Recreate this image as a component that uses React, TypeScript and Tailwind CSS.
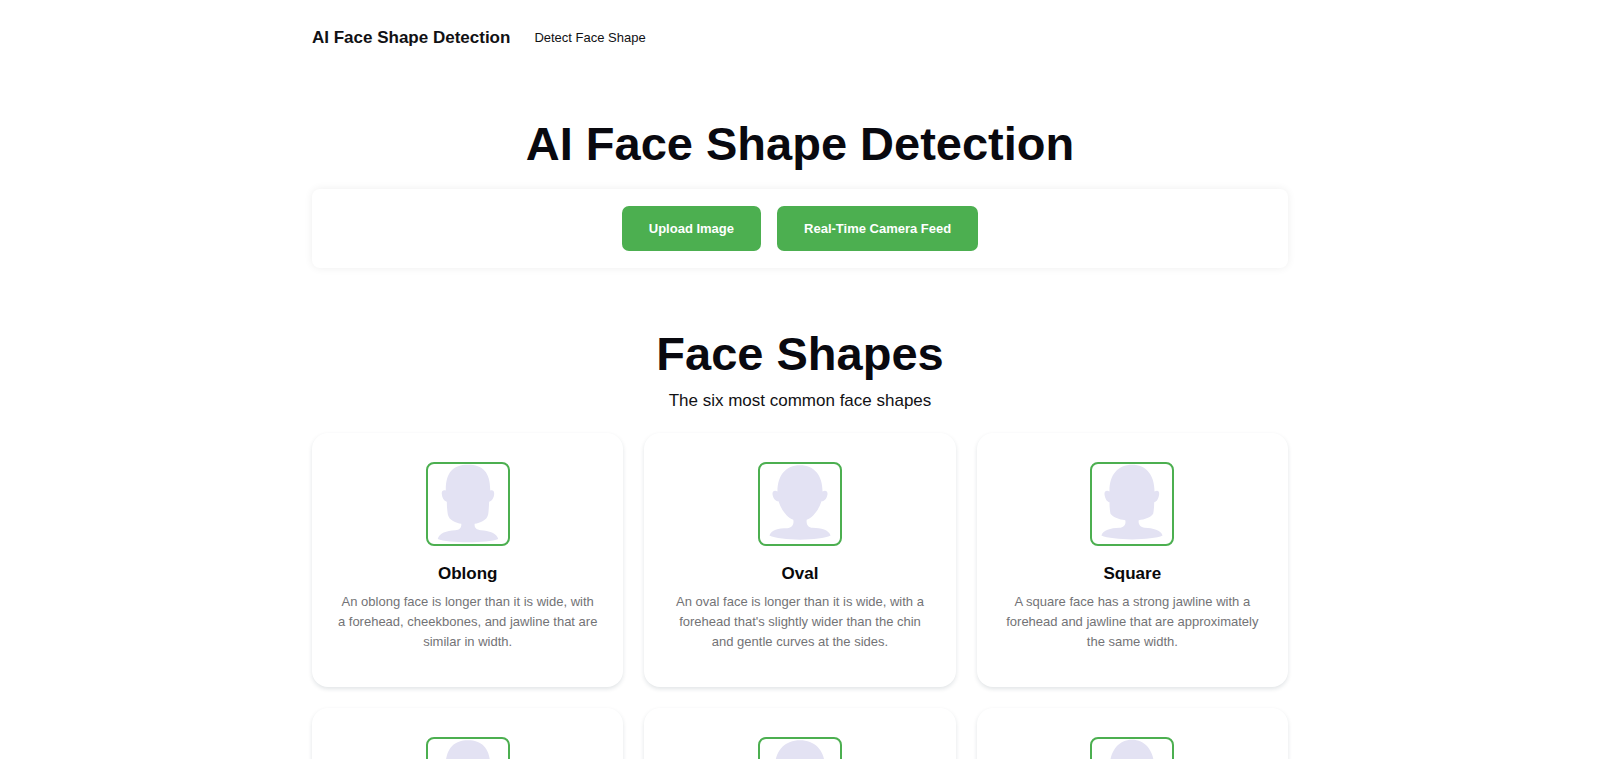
type Shape = {
  name: string
  description: string
  path: string
}

const shapes: Shape[] = [
  {
    name: "Oblong",
    description:
      "An oblong face is longer than it is wide, with a forehead, cheekbones, and jawline that are similar in width.",
    path: "M0 42 C-45 42 -67 66 -66 119 C-73 117 -79 119 -78 129 C-77 141 -72 149 -63 152 C-63 165 -62 178 -60 190 C-56 208 -36 215 -20 218 C-19 228 -24 236 -38 237 C-64 238 -86 246 -90 263 C-60 276 60 276 90 263 C86 246 62 238 38 237 C24 236 18 228 20 218 C36 215 56 208 60 190 C62 178 62 165 63 152 C72 149 77 141 78 129 C78 119 73 117 66 119 C67 66 45 42 0 42Z",
  },
  {
    name: "Oval",
    description:
      "An oval face is longer than it is wide, with a forehead that's slightly wider than the chin and gentle curves at the sides.",
    path: "M0 44 C-42 44 -67 74 -67 122 C-74 117 -82 119 -82 129 C-80 142 -74 150 -64 151 C-56 176 -40 198 -20 206 C-17 220 -24 230 -38 231 C-64 231 -86 236 -91 253 C-58 269 60 269 91 253 C86 236 62 231 38 230 C24 229 18 220 20 206 C40 198 56 176 64 151 C74 150 80 142 82 129 C82 119 74 117 67 122 C67 74 42 44 0 44Z",
  },
  {
    name: "Square",
    description:
      "A square face has a strong jawline with a forehead and jawline that are approximately the same width.",
    path: "M0 42 C-42 42 -68 72 -67 122 C-74 117 -82 119 -82 129 C-80 144 -75 151 -67 154 C-67 166 -66 178 -64 188 C-56 199 -38 205 -20 207 C-17 219 -24 229 -38 230 C-64 231 -86 237 -91 253 C-58 268 60 268 91 253 C86 237 62 231 38 230 C24 229 18 219 20 207 C38 205 56 199 63 188 C65 178 66 166 66 154 C74 151 79 144 81 129 C81 119 75 117 67 122 C67 72 42 42 0 42Z",
  },
  {
    name: "Rectangle",
    description:
      "A rectangle face is longer than it is wide, with a straight jawline and a forehead of the same width.",
    path: "M0 44 C-42 44 -66 68 -67 122 C-76 118 -80 122 -79 130 C-78 141 -73 149 -64 152 L-62 192 C-56 208 -36 215 -20 218 C-19 228 -24 236 -38 237 C-64 238 -88 246 -92 263 C-60 276 60 276 92 263 C88 246 64 238 38 237 C24 236 19 228 20 218 C36 215 56 208 62 192 L64 152 C73 149 78 141 79 130 C80 122 76 118 67 122 C66 68 42 44 0 44Z",
  },
  {
    name: "Round",
    description:
      "A round face is about as wide as it is long, with full cheeks and a softly curved jawline.",
    path: "M0 44 C-46 44 -74 76 -74 122 C-82 117 -89 121 -88 130 C-86 144 -80 151 -71 154 C-66 182 -46 202 -22 207 C-17 219 -24 229 -38 230 C-64 231 -86 237 -91 253 C-58 268 60 268 91 253 C86 237 64 231 38 230 C24 229 17 219 22 207 C46 202 66 182 71 154 C80 151 86 144 88 130 C89 121 82 117 74 122 C74 76 46 44 0 44Z",
  },
  {
    name: "Heart",
    description:
      "A heart face has a wide forehead and cheekbones that narrow down to a small, pointed chin.",
    path: "M0 42 C-40 42 -66 76 -66 122 C-74 117 -82 121 -82 130 C-80 142 -74 150 -65 151 C-56 176 -40 196 -21 207 C-17 220 -24 230 -38 231 C-64 231 -86 236 -91 253 C-58 269 60 269 91 253 C86 236 64 231 38 231 C24 230 17 220 21 207 C40 196 56 176 65 151 C74 150 80 142 82 130 C82 121 74 117 66 122 C66 76 40 42 0 42Z",
  },
]

function ShapeCard({ shape }: { shape: Shape }) {
  return (
    <article className="flex flex-col items-center rounded-2xl bg-white px-[25px] pt-[29px] pb-[35px] text-center shadow-[0_2px_4px_rgba(20,50,60,0.13)]">
      <svg
        viewBox="-119 40 238 238"
        className="size-[84px] rounded-lg border-2 border-[#4caf50]"
        role="img"
        aria-label={`${shape.name} face`}
      >
        <path d={shape.path} fill="#e3e2f3" />
      </svg>
      <h3 className="mt-3.5 text-[17px] leading-7 font-bold text-[#09090b]">{shape.name}</h3>
      <p className="mt-1 text-[13px] leading-5 text-[#737376]">{shape.description}</p>
    </article>
  )
}

export default function App() {
  return (
    <div className="min-h-screen bg-white font-['Liberation_Sans',Arial,sans-serif] text-[#111114]">
      <div className="mx-auto max-w-[1024px] px-6">
        {/* Navigation */}
        <header className="flex h-[75px] items-center gap-6">
          <a href="#" className="text-[17px] leading-6 font-bold">
            AI Face Shape Detection
          </a>
          <nav>
            <a href="#detect" className="text-[13px] leading-6">
              Detect Face Shape
            </a>
          </nav>
        </header>

        <main>
          {/* Detection */}
          <section id="detect" className="pt-10">
            <h1 className="text-center text-[47px] leading-[58px] font-bold text-[#09090f]">
              AI Face Shape Detection
            </h1>
            <div className="mt-4 flex flex-wrap justify-center gap-4 rounded-lg bg-white p-[17px] shadow-[0_0_9px_rgba(0,0,0,0.07)]">
              <button className="rounded-[7px] bg-[#4caf50] px-[27px] py-3 text-[13px] leading-[21px] font-bold text-white">
                Upload Image
              </button>
              <button className="rounded-[7px] bg-[#4caf50] px-[27px] py-3 text-[13px] leading-[21px] font-bold text-white">
                Real-Time Camera Feed
              </button>
            </div>
          </section>

          {/* Shape overview */}
          <section className="pt-[57px] pb-16">
            <h2 className="text-center text-[47px] leading-[58px] font-bold text-[#09090f]">
              Face Shapes
            </h2>
            <p className="mt-1.5 text-center text-[17px] leading-6">
              The six most common face shapes
            </p>
            <div className="mt-5 grid grid-cols-1 gap-[21px] sm:grid-cols-2 lg:grid-cols-3">
              {shapes.map((shape) => (
                <ShapeCard key={shape.name} shape={shape} />
              ))}
            </div>
          </section>
        </main>
      </div>
    </div>
  )
}
